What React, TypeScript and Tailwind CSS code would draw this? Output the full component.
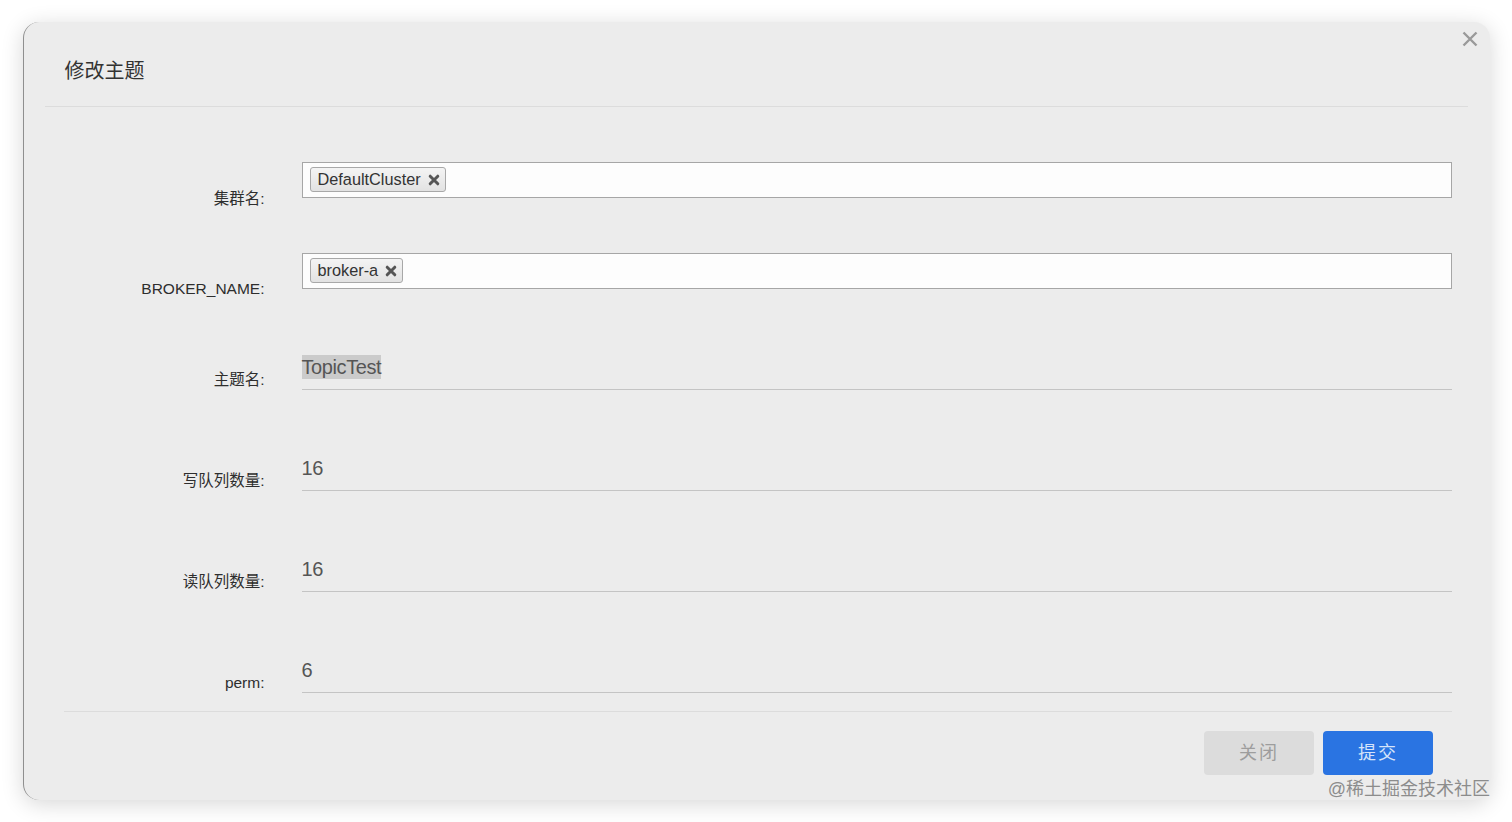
import React from "react";

const FONT = '"Liberation Sans", Arial, "Noto Sans CJK SC", sans-serif';

function ChipX() {
  return (
    <svg width="12" height="12" viewBox="0 0 12 12" className="ml-[7px]">
      <path d="M2.2 2.2 L9.8 9.8 M9.8 2.2 L2.2 9.8" stroke="#555" strokeWidth="3" strokeLinecap="round" />
    </svg>
  );
}

function Chip({ text }: { text: string }) {
  return (
    <div className="flex items-center h-[25px] pl-[7px] pr-[5px] rounded-[3px] border border-[#a8a8a8] bg-gradient-to-b from-[#f4f4f4] to-[#e2e2e2] text-[16.3px] text-[#333] leading-none">
      <span>{text}</span>
      <ChipX />
    </div>
  );
}

function Label({ text, mt }: { text: string; mt: string }) {
  return (
    <div className={`w-[201px] shrink-0 text-right text-[15.5px] leading-[20px] text-[#2e2e2e] ${mt}`}>{text}</div>
  );
}

function TagRow({ label, chip, h, mt }: { label: string; chip: string; h: string; mt: string }) {
  return (
    <div className={`flex items-start ${h}`}>
      <Label text={label} mt={mt} />
      <div className="ml-[37px] flex-1 h-[36px] border border-[#a6a6a6] bg-[#fdfdfd] pt-[4px] pl-[7px] flex items-start">
        <Chip text={chip} />
      </div>
    </div>
  );
}

function LineRow({ label, value, h, highlight }: { label: string; value: string; h: string; highlight?: boolean }) {
  return (
    <div className={`flex items-start ${h}`}>
      <Label text={label} mt="mt-[15px]" />
      <div className="ml-[37px] flex-1 h-[35px] border-b border-[#c4c4c4] pb-[10px]">
        <span
          className={`inline-block h-[24px] leading-[24px] text-[20px] tracking-[-0.4px] text-[#555] ${highlight ? "bg-[#cbcbcb]" : ""}`}
        >
          {value}
        </span>
      </div>
    </div>
  );
}

export default function App() {
  return (
    <div className="w-[1512px] h-[822px] bg-white relative overflow-hidden" style={{ fontFamily: FONT }}>
      <div className="pt-[22px] pl-[23px]">
        <div className="relative w-[1467px] h-[778px] rounded-[16px] bg-[#ececec] shadow-[0_4px_22px_rgba(0,0,0,0.16)] border-l-[1.5px] border-l-[#8f8f8f]">
          <button className="absolute right-[12px] top-[9px] w-[16px] h-[16px]">
            <svg width="16" height="16" viewBox="0 0 16 16">
              <path d="M1.5 1.5 L14.5 14.5 M14.5 1.5 L1.5 14.5" stroke="#9a9a9a" strokeWidth="2.4" />
            </svg>
          </button>

          <div className="ml-[20.5px] mr-[22px] h-[85px] border-b border-[#dcdcdc] pl-[20px] pt-[35px]">
            <div className="text-[20px] leading-[28px] text-[#333]">修改主题</div>
          </div>

          <div className="ml-[39.5px] mr-[38px] pt-[55px]">
            <TagRow label="集群名:" chip="DefaultCluster" h="h-[91px]" mt="mt-[27px]" />
            <TagRow label="BROKER_NAME:" chip="broker-a" h="h-[102px]" mt="mt-[26px]" />
            <LineRow label="主题名:" value="TopicTest" h="h-[101px]" highlight />
            <LineRow label="写队列数量:" value="16" h="h-[101px]" />
            <LineRow label="读队列数量:" value="16" h="h-[101px]" />
            <LineRow label="perm:" value="6" h="h-[53px]" />
            <div className="border-t border-[#dcdcdc]" />
          </div>

          <div className="flex justify-end gap-[9px] pr-[57px] pt-[19px]">
            <button className="w-[110px] h-[44px] rounded-[4px] bg-[#dcdcdc] text-[18px] text-[#9d9d9d] tracking-[2px]">
              关闭
            </button>
            <button className="w-[110px] h-[44px] rounded-[4px] bg-[#2a74e2] text-[18px] text-[#d6e4fa] tracking-[2px]">
              提交
            </button>
          </div>
        </div>
      </div>
      <div className="absolute right-[22px] top-[778px] text-[18px] leading-[22px] text-[#8c8c8c]">@稀土掘金技术社区</div>
    </div>
  );
}
